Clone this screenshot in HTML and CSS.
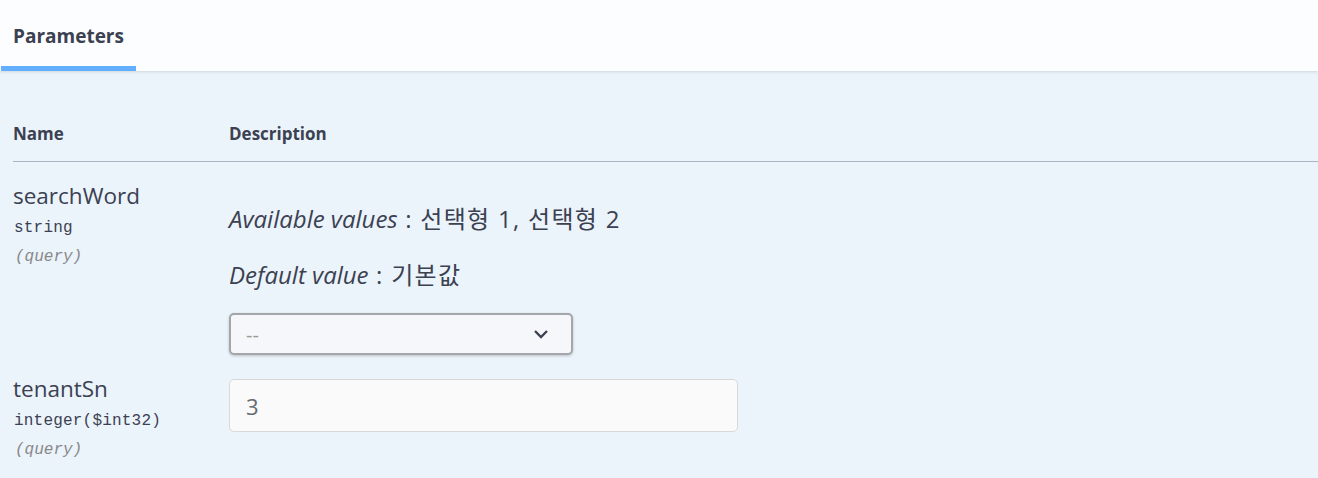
FILE: index.html
```html
<!DOCTYPE html>
<html lang="ko">
<head>
<meta charset="utf-8">
<title>Parameters</title>
<link rel="stylesheet" href="styles.css">
</head>
<body>
<div class="section">
  <div class="section-header">
    <div class="tab">
      <h4 class="tab-title">Parameters</h4>
    </div>
  </div>
  <div class="params">
    <div class="row head">
      <div class="col-name">Name</div>
      <div class="col-desc">Description</div>
    </div>
    <div class="row param first">
      <div class="col-name">
        <div class="p-name">searchWord</div>
        <div class="p-type">string</div>
        <div class="p-in">(query)</div>
      </div>
      <div class="col-desc">
        <p class="meta"><i>Available values</i><span class="val"> : 선택형 1, 선택형 2</span></p>
        <p class="meta"><i>Default value</i><span class="val"> : 기본값</span></p>
        <div class="select">
          <span class="select-text">--</span>
          <svg class="chev" width="16" height="10" viewBox="0 0 16 10"><path d="M2 2 L8 8 L14 2" fill="none" stroke="#3b4151" stroke-width="2.4"/></svg>
        </div>
      </div>
    </div>
    <div class="row param second">
      <div class="col-name">
        <div class="p-name">tenantSn</div>
        <div class="p-type">integer($int32)</div>
        <div class="p-in">(query)</div>
      </div>
      <div class="col-desc">
        <div class="input"><span class="input-text">3</span></div>
      </div>
    </div>
  </div>
</div>
</body>
</html>
```

FILE: styles.css
```css
html, body {
  margin: 0;
  padding: 0;
}
body {
  width: 1318px;
  height: 478px;
  overflow: hidden;
  background: #ebf3fb;
  font-family: "Open Sans", "Noto Sans CJK KR", sans-serif;
  color: #3b4151;
}
.section-header {
  height: 71px;
  background: #fcfdfe;
  box-shadow: 0 1px 3px rgba(0, 0, 0, 0.12);
  display: flex;
  align-items: stretch;
}
.tab {
  width: 135px;
  margin-left: 1px;
  border-bottom: 5px solid #61affe;
  box-sizing: border-box;
  display: flex;
  align-items: center;
}
.tab-title {
  margin: 5px 0 0 12px;
  font-size: 19px;
  font-weight: 700;
}
.params {
  padding-left: 13px;
}
.row {
  display: grid;
  grid-template-columns: 216px 1fr;
}
.head {
  height: 90px;
  align-items: end;
  border-bottom: 1px solid #aeb4c1;
  font-size: 17px;
  font-weight: 700;
}
.head > div {
  padding-bottom: 16px;
}
.p-name {
  font-size: 22.5px;
  line-height: 32px;
}
.p-type {
  font-family: "Liberation Mono", monospace;
  font-size: 16px;
  letter-spacing: 0.2px;
  line-height: 32px;
  padding-left: 1px;
}
.p-in {
  font-family: "Liberation Mono", monospace;
  font-size: 16px;
  font-style: italic;
  color: #888888;
  line-height: 26px;
  padding-left: 2px;
}
.first {
  padding-top: 18px;
}
.first .col-desc {
  padding-top: 22px;
}
.meta {
  margin: 0 0 22px 0;
  font-size: 24px;
  line-height: 34px;
}
.meta i {
  font-style: italic;
}
.val {
  letter-spacing: 1.3px;
}
.select {
  width: 344px;
  height: 42px;
  box-sizing: border-box;
  border: 2px solid #a4a6aa;
  border-radius: 5px;
  background: #f5f7fb;
  box-shadow: 0 1px 3px rgba(0, 0, 0, 0.2);
  display: flex;
  align-items: center;
  justify-content: space-between;
  padding: 0 22px 0 15px;
  margin-top: -1px;
}
.select-text {
  color: #9a9a9a;
  font-size: 20px;
}
.second {
  padding-top: 18px;
}
.input {
  width: 509px;
  height: 53px;
  box-sizing: border-box;
  border: 1px solid #d9d9d9;
  border-radius: 5px;
  background: #fafafa;
  display: flex;
  align-items: center;
  padding-left: 16px;
  margin-top: 6px;
}
.input-text {
  font-size: 22px;
  color: #666a72;
}
```
